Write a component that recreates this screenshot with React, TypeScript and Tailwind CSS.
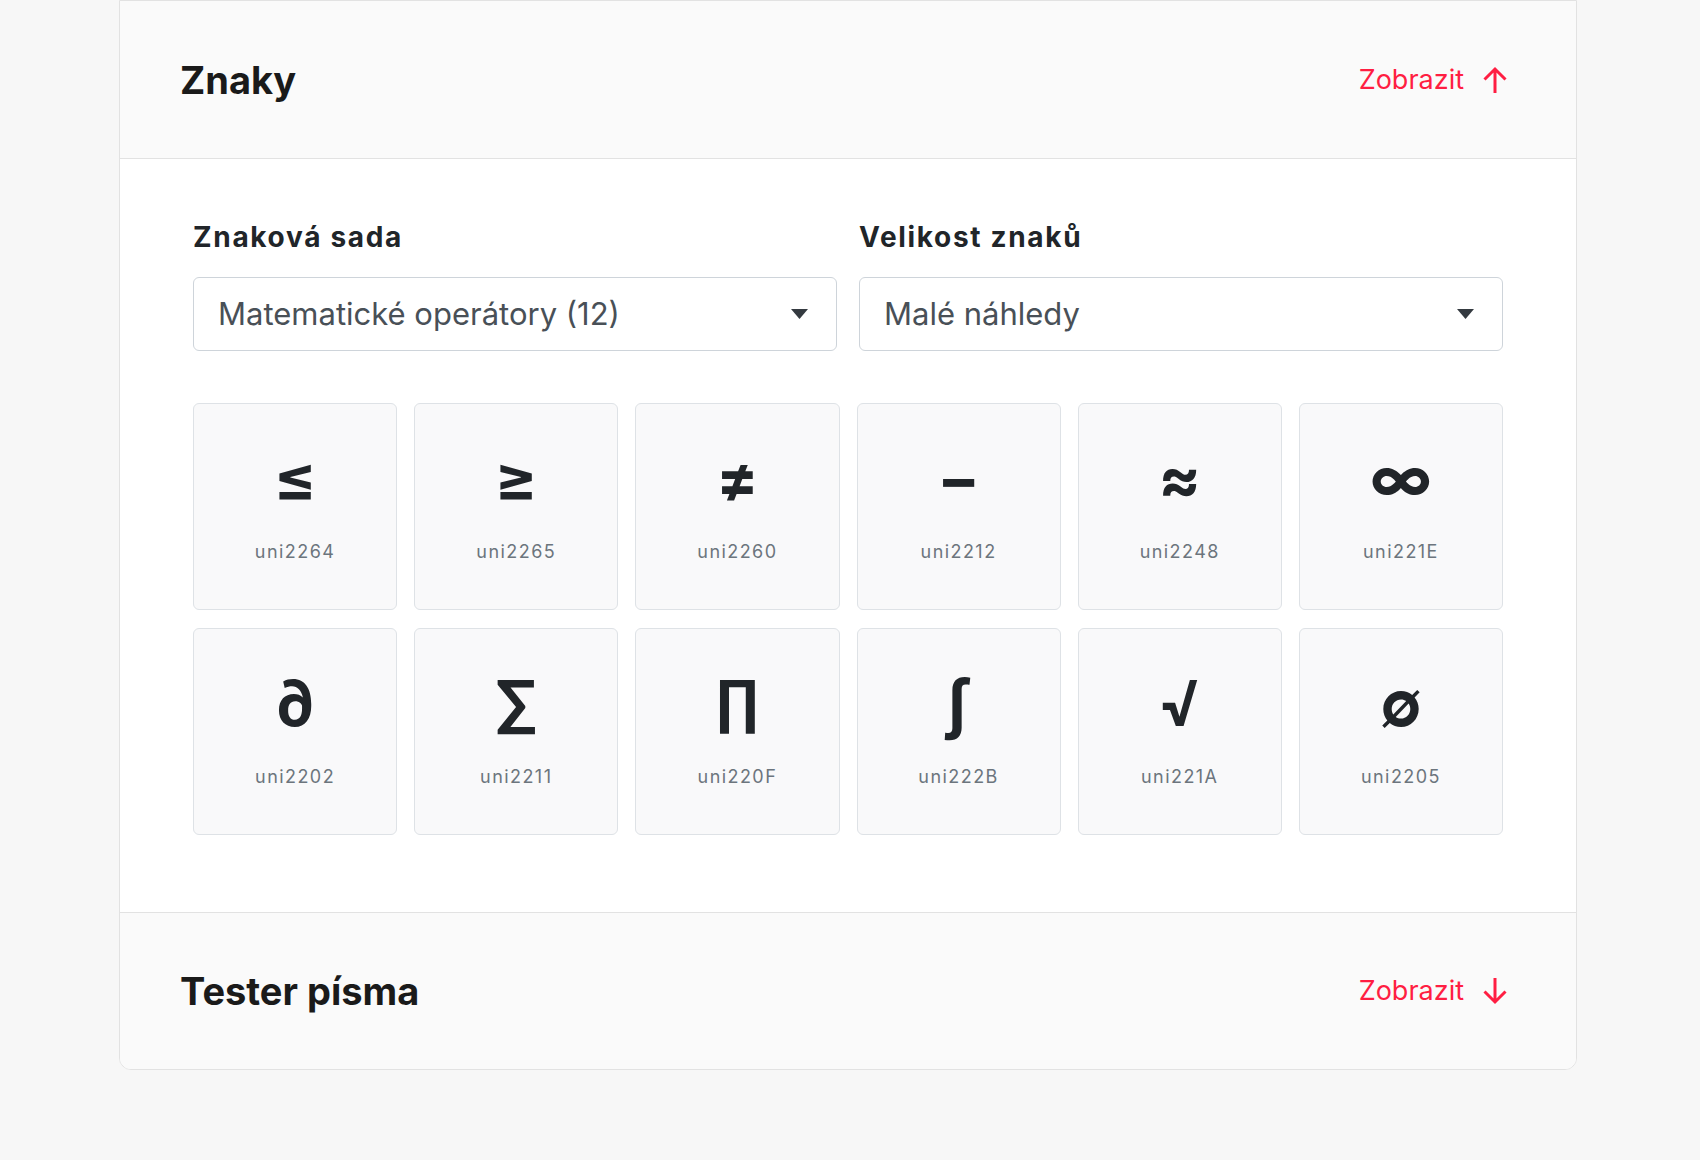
import React from "react";

const items: [string, string][] = [
  ["≤", "uni2264"],
  ["≥", "uni2265"],
  ["≠", "uni2260"],
  ["−", "uni2212"],
  ["≈", "uni2248"],
  ["∞", "uni221E"],
  ["∂", "uni2202"],
  ["∑", "uni2211"],
  ["∏", "uni220F"],
  ["∫", "uni222B"],
  ["√", "uni221A"],
  ["∅", "uni2205"],
];

function Arrow({ up }: { up: boolean }) {
  return (
    <svg width="26" height="28" viewBox="0 0 26 28" fill="none" stroke="currentColor" strokeWidth="3" className={up ? "" : "rotate-180"}>
      <path d="M13 3.5V27M2.5 13.5 13 3l10.5 10.5" />
    </svg>
  );
}

function Toggle({ up }: { up: boolean }) {
  return (
    <button className="flex items-center gap-[18px] text-[#ff1e42] text-[27px] leading-none">
      <span>Zobrazit</span>
      <Arrow up={up} />
    </button>
  );
}

function Select({ value }: { value: string }) {
  return (
    <div className="flex h-[74px] items-center justify-between rounded-[6px] border border-[#ced4da] bg-white pl-[24px] pr-[28px]">
      <span className="text-[31px] leading-none text-[#495057]">{value}</span>
      <svg width="17" height="10" viewBox="0 0 17 10">
        <path d="M0 0h17L8.5 10z" fill="#343a40" />
      </svg>
    </div>
  );
}

export default function App() {
  return (
    <div className="min-h-[1160px] bg-[#f7f7f7] pl-[119px] font-['Inter',sans-serif]">
      <div className="w-[1458px] overflow-hidden rounded-b-[12px] border border-[#e2e2e2] bg-white">
        <div className="flex h-[158px] items-center justify-between border-b border-[#e2e2e2] bg-[#fafafa] pl-[60px] pr-[68px]">
          <h2 className="text-[38px] font-bold leading-none text-[#1a1a1a]">Znaky</h2>
          <Toggle up />
        </div>
        <div className="px-[73px] pt-[62px] pb-[77px]">
          <div className="grid grid-cols-2 gap-[22px]">
            <div>
              <div className="mb-[22px] text-[28px] font-bold leading-[1.2] tracking-[0.06em] text-[#212529]">Znaková sada</div>
              <Select value="Matematické operátory (12)" />
            </div>
            <div>
              <div className="mb-[22px] text-[28px] font-bold leading-[1.2] tracking-[0.06em] text-[#212529]">Velikost znaků</div>
              <Select value="Malé náhledy" />
            </div>
          </div>
          <div className="mt-[52px] grid grid-cols-6 gap-x-[17px] gap-y-[18px]">
            {items.map(([g, n]) => (
              <div
                key={n}
                className="flex h-[207px] flex-col items-center rounded-[6px] border border-[#dee2e6] bg-[#f9f9fa] pt-[43px]"
              >
                <div className="text-[63px] font-bold leading-none text-[#212529]">{g}</div>
                <div className="mt-[28px] text-[18px] leading-[1.5] tracking-[0.08em] text-[#6c757d]">{n}</div>
              </div>
            ))}
          </div>
        </div>
        <div className="flex h-[157px] items-center justify-between border-t border-[#e2e2e2] bg-[#fafafa] pl-[60px] pr-[68px]">
          <h2 className="text-[38px] font-bold leading-none text-[#1a1a1a]">Tester písma</h2>
          <Toggle up={false} />
        </div>
      </div>
    </div>
  );
}
